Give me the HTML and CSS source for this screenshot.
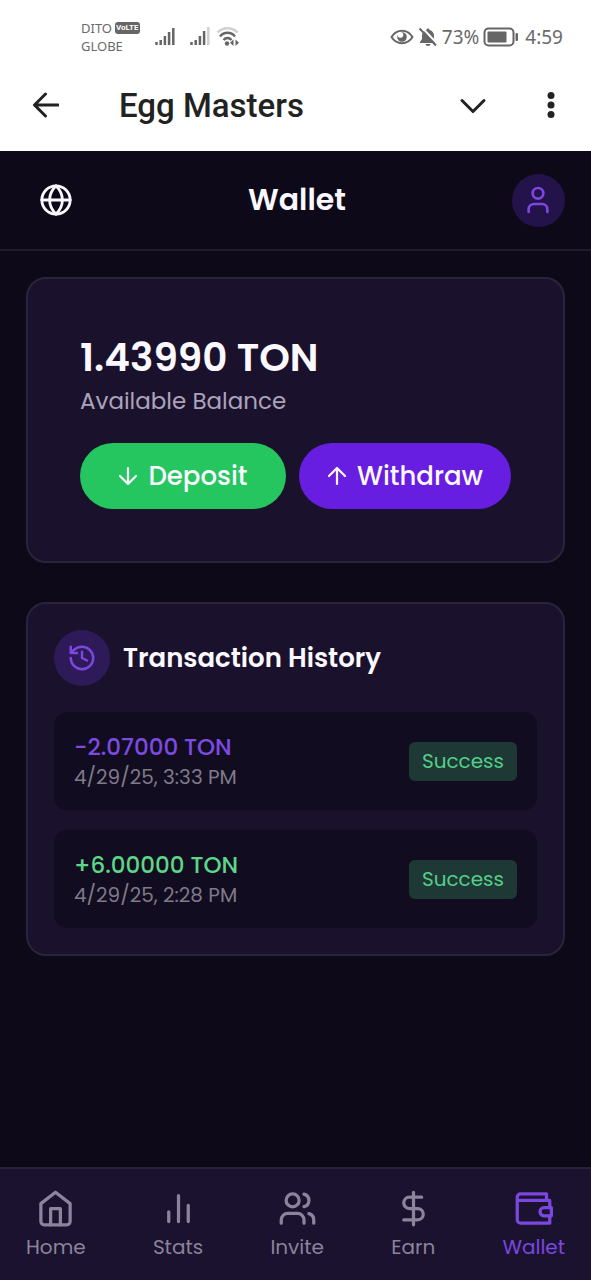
FILE: index.html
```html
<!DOCTYPE html>
<html lang="en">
<head>
<meta charset="utf-8">
<meta name="viewport" content="width=device-width, initial-scale=1">
<title>Egg Masters</title>
<link rel="stylesheet" href="styles.css">
</head>
<body>
<div class="screen">
  <div class="status">
    <div class="carriers">
      <div class="carrier">DITO <span class="volte">VoLTE</span></div>
      <div class="carrier">GLOBE</div>
    </div>
    <svg class="signal" viewBox="0 0 20 20" aria-hidden="true"><path d="M1.500 18v-3M5.700 18v-5M9.900 18V9M14.100 18V5M18.300 18V1"/></svg>
    <svg class="signal" viewBox="0 0 20 20" aria-hidden="true"><path d="M1.500 18v-3M5.700 18v-5M9.900 18V9M14.100 18V4"/><path class="dim" d="M18.300 18V0"/></svg>
    <svg class="wifi" viewBox="0 0 24 20" aria-hidden="true">
      <path class="dim" d="M1.500 5.500C7-.2 16-.2 21.500 5.500"/>
      <path d="M4 9.500c4-5 11-5 15 0M7.500 13c2.300-2.700 5.700-2.700 8 0"/>
      <circle cx="11" cy="16.500" r="2.200"/><path class="tip" d="m17.500 12.500-3.500 3.200 3.500 3.200zM19.500 12.500l3.500 3.200-3.500 3.200z"/>
    </svg>
    <div class="status-right">
      <svg class="eye" viewBox="0 0 24 16" aria-hidden="true"><path class="line" d="M1.500 8C6.500-.2 17.500-.2 22.500 8 17.500 16.200 6.500 16.200 1.500 8z"/><path d="M12 3.200A4.800 4.800 0 1 1 7.200 8c0-.8.2-1.500.5-2.200A2.800 2.800 0 1 0 11 3.300z"/></svg>
      <svg class="bell" viewBox="0 0 20 20" aria-hidden="true"><path d="M10 1.500c.9 0 1.500.6 1.500 1.400C14.500 3.600 16 6 16 8.500V12l2 3v1H2v-1l2-3V8.500C4 6 5.500 3.600 8.500 2.900c0-.8.6-1.400 1.500-1.400zM7.500 17h5a2.500 2 0 0 1-5 0z"/><path class="gap" d="M3.500 0 20 17.500"/><path class="slash" d="M1.500 1.500 18 18.500"/></svg>
      <span>73%</span>
      <svg class="battery" viewBox="0 0 36 20" aria-hidden="true"><rect class="line" x="1.500" y="1.500" width="29" height="17" rx="4"/><rect x="4.500" y="4.500" width="19" height="11" rx="1"/><rect x="32.500" y="6" width="2.500" height="8" rx="1"/></svg>
      <span class="clock">4:59</span>
    </div>
  </div>

  <header class="appbar">
    <button class="plain" aria-label="Back"><svg class="i-back" viewBox="0 0 28 28"><path d="M27 13H4M14.500 2 3.500 13l11 11"/></svg></button>
    <h1>Egg Masters</h1>
    <button class="plain" aria-label="Collapse"><svg class="i-chev" viewBox="0 0 28 28"><path d="m3 8.500 11 11 11-11"/></svg></button>
    <button class="plain more" aria-label="More"><svg class="i-more" viewBox="0 0 8 28"><circle cx="4" cy="3.500" r="3.500"/><circle cx="4" cy="13" r="3.500"/><circle cx="4" cy="22.500" r="3.500"/></svg></button>
  </header>

  <div class="titlebar">
    <button class="round" aria-label="Language"><svg class="icon globe" viewBox="0 0 24 24"><circle cx="12" cy="12" r="10"/><path d="M2 12h20M12 2c3 3 4.500 6.500 4.500 10S15 19 12 22c-3-3-4.500-6.500-4.500-10S9 5 12 2z"/></svg></button>
    <h2>Wallet</h2>
    <button class="round profile" aria-label="Profile"><svg class="icon" viewBox="0 0 24 24"><circle cx="12" cy="7" r="4"/><path d="M19 21v-2a4 4 0 0 0-4-4H9a4 4 0 0 0-4 4v2"/></svg></button>
  </div>

  <main class="content">
    <section class="card balance">
      <p class="amount">1.43990 TON</p>
      <p class="caption">Available Balance</p>
      <div class="actions">
        <button class="pill deposit"><svg class="arrow" viewBox="0 0 20 20" aria-hidden="true"><path d="M10 2v16M2 10l8 8 8-8"/></svg>Deposit</button>
        <button class="pill withdraw"><svg class="arrow" viewBox="0 0 20 20" aria-hidden="true"><path d="M10 18V2M2 10l8-8 8 8"/></svg>Withdraw</button>
      </div>
    </section>

    <section class="card history">
      <div class="history-head">
        <span class="badge"><svg class="icon" viewBox="0 0 24 24" aria-hidden="true"><path d="M3 12a9 9 0 1 0 9-9 9.750 9.750 0 0 0-6.740 2.740L3 8M3 3v5h5M12 7v5l4 2"/></svg></span>
        <h3>Transaction History</h3>
      </div>
      <ul class="list">
        <li class="row">
          <div><p class="value out">−2.07000 TON</p><p class="date">4/29/25, 3:33 PM</p></div>
          <span class="tag">Success</span>
        </li>
        <li class="row">
          <div><p class="value in">+6.00000 TON</p><p class="date">4/29/25, 2:28 PM</p></div>
          <span class="tag">Success</span>
        </li>
      </ul>
    </section>
  </main>

  <nav class="tabs">
    <a href="#home"><svg class="icon" viewBox="0 0 24 24" aria-hidden="true"><path d="m3 9 9-7 9 7v11a2 2 0 0 1-2 2H5a2 2 0 0 1-2-2z"/><path d="M9 22V12h6v10"/></svg>Home</a>
    <a href="#stats"><svg class="icon" viewBox="0 0 24 24" aria-hidden="true"><path d="M18 20V10M12 20V4M6 20v-6"/></svg>Stats</a>
    <a href="#invite"><svg class="icon" viewBox="0 0 24 24" aria-hidden="true"><path d="M16 21v-2a4 4 0 0 0-4-4H6a4 4 0 0 0-4 4v2"/><circle cx="9" cy="7" r="4"/><path d="M22 21v-2a4 4 0 0 0-3-3.870M16 3.130a4 4 0 0 1 0 7.750"/></svg>Invite</a>
    <a href="#earn"><svg class="icon" viewBox="0 0 24 24" aria-hidden="true"><path d="M12 2v20M17 5H9.500a3.500 3.500 0 0 0 0 7h5a3.500 3.500 0 0 1 0 7H6"/></svg>Earn</a>
    <a href="#wallet" class="active" aria-current="page"><svg class="icon" viewBox="0 0 24 24" aria-hidden="true"><path d="M20 7V3H4a2 2 0 0 0-2 2v14a2 2 0 0 0 2 2h18v-4.500M2 7h20v4.500"/><path d="M23 11.500h-4.500a2.500 2.500 0 0 0 0 5H23z"/></svg>Wallet</a>
  </nav>
</div>
</body>
</html>
```
FILE: styles.css
```css
* { box-sizing: border-box; }
body { margin: 0; background: #0d0918; }
h1, h2, h3, p, ul { margin: 0; padding: 0; }
button { border: 0; padding: 0; background: none; color: inherit; font: inherit; cursor: pointer; }
svg { display: block; flex: none; }

.screen {
  min-height: 100vh;
  display: flex;
  flex-direction: column;
  color: #fbf9ff;
  font-family: Poppins, Inter, sans-serif;
}

.status {
  display: flex;
  align-items: center;
  height: 60px;
  padding: 14px 28px 0 81px;
  background: #fff;
  color: #6a6a6a;
  fill: #666;
  font-family: "Noto Sans", sans-serif;
}
.carrier { display: flex; align-items: center; gap: 3px; font-size: 13px; line-height: 18px; }
.volte {
  padding: 0 1px;
  border-radius: 3px;
  background: #666;
  color: #fff;
  font: 700 8px/12px "Liberation Sans Narrow", Roboto, sans-serif;
}
.signal { width: 20px; height: 20px; margin-left: 15px; fill: none; stroke: #666; stroke-width: 2.500; }
.signal .dim, .wifi .dim { stroke: #d0d0d0; }
.wifi { width: 24px; height: 20px; margin-left: 6px; stroke: #666; stroke-width: 2.400; }
.wifi path { fill: none; }
.wifi circle, .wifi .tip { fill: #666; stroke: none; }
.status-right { display: flex; align-items: center; margin-left: auto; font-size: 19px; line-height: 24px; }
.eye { width: 24px; height: 16px; }
.line { fill: none; stroke: #666; stroke-width: 2; }
.bell { width: 20px; height: 20px; margin: 0 4px; }
.gap { stroke: #fff; stroke-width: 2; }
.slash { stroke: #666; stroke-width: 2; }
.battery { width: 36px; height: 20px; margin: 0 6px 0 4px; }

.appbar {
  display: flex;
  align-items: center;
  height: 91px;
  padding: 0 36px 0 31px;
  background: #fff;
  color: #222;
}
.appbar h1 { flex: 1; margin-left: 60px; font: 500 33px/40px Roboto, sans-serif; }
.i-back, .i-chev { width: 28px; height: 28px; fill: none; stroke: #222; stroke-width: 3; stroke-linecap: round; stroke-linejoin: round; }
.more { margin-left: 60px; }
.i-more { width: 8px; height: 28px; fill: #222; }

.icon { width: 32px; height: 32px; fill: none; stroke: currentColor; stroke-width: 2; stroke-linecap: round; stroke-linejoin: round; }
.titlebar {
  display: flex;
  align-items: center;
  justify-content: space-between;
  height: 100px;
  padding: 0 26px;
  border-bottom: 2px solid #1f1b2a;
}
.titlebar h2 { font-size: 30px; font-weight: 600; line-height: 44px; }
.round { display: grid; place-items: center; width: 53px; height: 53px; margin-left: 3px; border-radius: 50%; }
.globe { width: 34px; height: 34px; }
.profile { margin-left: 0; background: #24124a; color: #7c46e0; }

.content { flex: 1; display: flex; flex-direction: column; gap: 39px; padding: 26px 26px 40px; }
.card { border: 2px solid #2a243a; border-radius: 20px; background: #1a122c; }
.balance { padding: 52px; }
.amount { font-size: 39px; font-weight: 600; line-height: 54px; }
.caption { color: #aaa3bb; font-size: 23px; line-height: 32px; }
.actions { display: flex; gap: 13px; margin-top: 26px; }
.pill {
  flex: 1;
  display: flex;
  align-items: center;
  justify-content: center;
  gap: 10px;
  height: 66px;
  padding: 0 28px;
  border-radius: 33px;
  font-size: 26px;
  font-weight: 500;
  white-space: nowrap;
}
.deposit { background: #25c65f; }
.withdraw { background: #681ee0; }
.arrow { width: 20px; height: 20px; fill: none; stroke: currentColor; stroke-width: 2.200; stroke-linecap: round; stroke-linejoin: round; }

.history { padding: 26px; }
.history-head { display: flex; align-items: center; gap: 13px; }
.badge { display: grid; place-items: center; width: 56px; height: 56px; border-radius: 50%; background: #2e1a58; color: #7c46e0; }
.badge .icon { width: 30px; height: 30px; }
.history h3 { font-size: 26px; font-weight: 600; line-height: 40px; }
.list { display: flex; flex-direction: column; gap: 20px; margin-top: 26px; list-style: none; }
.row {
  display: flex;
  align-items: center;
  justify-content: space-between;
  height: 98px;
  padding: 0 20px;
  border-radius: 13px;
  background: #120c20;
}
.value { font-size: 23px; font-weight: 500; line-height: 32px; }
.out { color: #7c4be0; }
.in { color: #5bd787; }
.date { color: #7f7a8a; font-size: 20px; line-height: 28px; }
.tag { padding: 0 13px; border-radius: 6px; background: #1e3835; color: #55cf8a; font-size: 20px; line-height: 39px; }

.tabs {
  display: flex;
  justify-content: space-between;
  height: 113px;
  padding: 20px 26px 0;
  border-top: 2px solid #2a243a;
  background: #1a122e;
}
.tabs a { display: flex; flex-direction: column; align-items: center; gap: 5px; color: #8b849b; font-size: 20px; line-height: 28px; text-decoration: none; }
.tabs .icon { width: 39px; height: 39px; }
.tabs .active { color: #7c46e0; }
```
